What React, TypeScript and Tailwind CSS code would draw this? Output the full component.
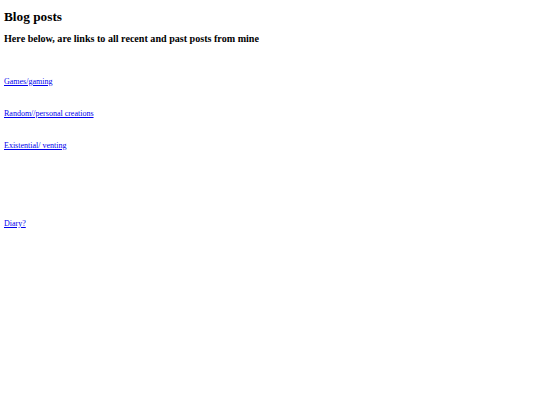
export default function App() {
  const links = ["Games/gaming", "Random//personal creations", "Existential/ venting"];
  return (
    <div className="min-h-screen bg-white px-[4px] text-black" style={{ fontFamily: '"Liberation Serif", "Times New Roman", serif' }}>
      <h1 className="pt-[8px] text-[13.3px] font-bold leading-[18px]">Blog posts</h1>
      <h2 className="mt-[6px] text-[10.1px] font-bold leading-[14px]">Here below, are links to all recent and past posts from mine</h2>

      <div className="mt-[30px] flex flex-col gap-[21px]">
        {links.map((l) => (
          <a key={l} href="#" className="block text-[8px] leading-[11px] text-[#0000ee] underline">
            {l}
          </a>
        ))}
      </div>

      <a href="#" className="mt-[67px] block text-[8px] leading-[11px] text-[#0000ee] underline">
        Diary?
      </a>
    </div>
  );
}
